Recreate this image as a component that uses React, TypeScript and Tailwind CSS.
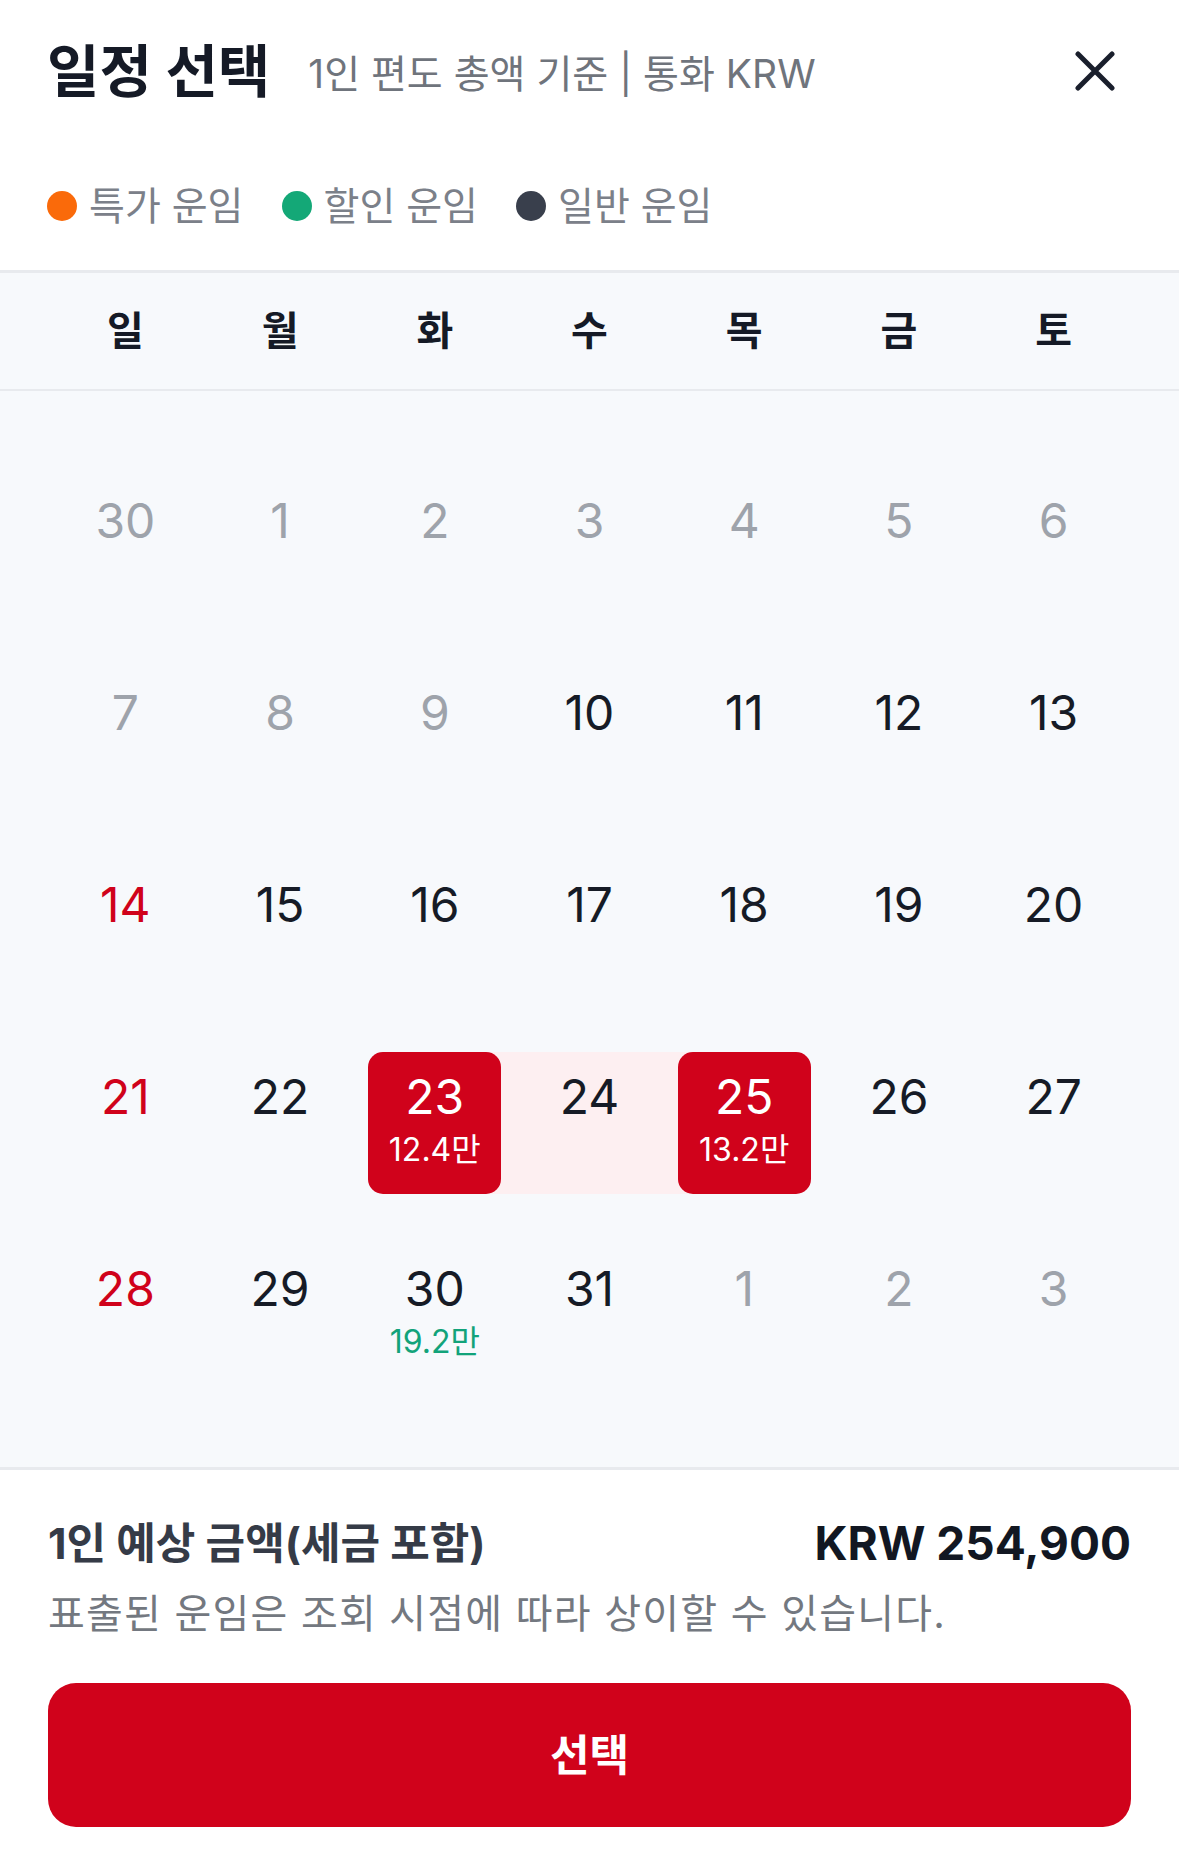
import React from "react";

type Cell = {
  d: number;
  kind: "muted" | "normal" | "sun" | "sel";
  price?: string;
  priceColor?: "green";
  range?: "start" | "mid" | "end";
};

const rows: Cell[][] = [
  [30, 1, 2, 3, 4, 5, 6].map((d) => ({ d, kind: "muted" as const })),
  [
    { d: 7, kind: "muted" },
    { d: 8, kind: "muted" },
    { d: 9, kind: "muted" },
    { d: 10, kind: "normal" },
    { d: 11, kind: "normal" },
    { d: 12, kind: "normal" },
    { d: 13, kind: "normal" },
  ],
  [
    { d: 14, kind: "sun" },
    { d: 15, kind: "normal" },
    { d: 16, kind: "normal" },
    { d: 17, kind: "normal" },
    { d: 18, kind: "normal" },
    { d: 19, kind: "normal" },
    { d: 20, kind: "normal" },
  ],
  [
    { d: 21, kind: "sun" },
    { d: 22, kind: "normal" },
    { d: 23, kind: "sel", price: "12.4만", range: "start" },
    { d: 24, kind: "normal", range: "mid" },
    { d: 25, kind: "sel", price: "13.2만", range: "end" },
    { d: 26, kind: "normal" },
    { d: 27, kind: "normal" },
  ],
  [
    { d: 28, kind: "sun" },
    { d: 29, kind: "normal" },
    { d: 30, kind: "normal", price: "19.2만", priceColor: "green" },
    { d: 31, kind: "normal" },
    { d: 1, kind: "muted" },
    { d: 2, kind: "muted" },
    { d: 3, kind: "muted" },
  ],
];

const weekdays = ["일", "월", "화", "수", "목", "금", "토"];

function DayCell({ c }: { c: Cell }) {
  const band =
    c.range === "start"
      ? "bg-[linear-gradient(to_right,transparent_50%,#fdeff1_50%)]"
      : c.range === "end"
      ? "bg-[linear-gradient(to_right,#fdeff1_50%,transparent_50%)]"
      : c.range === "mid"
      ? "bg-[#fdeff1]"
      : "";
  const numColor =
    c.kind === "muted"
      ? "text-[#9ea3ab]"
      : c.kind === "sun"
      ? "text-[#d0021b]"
      : c.kind === "sel"
      ? "text-white"
      : "text-[#161b26]";
  return (
    <div className="h-[192px] pt-[25px]">
      <div className={`h-[142px] ${band}`}>
        <div
          className={`mx-[11px] h-full rounded-[15px] flex flex-col items-center pt-[17px] ${
            c.kind === "sel" ? "bg-[#d0021b]" : ""
          }`}
        >
          <div className={`text-[48px] leading-[56px] font-normal ${numColor}`}>{c.d}</div>
          {c.price && (
            <div
              className={`mt-[5px] text-[32px] leading-[40px] ${
                c.priceColor === "green" ? "text-[#12a37a]" : "text-white"
              }`}
            >
              {c.price}
            </div>
          )}
        </div>
      </div>
    </div>
  );
}

export default function App() {
  return (
    <div
      className="w-[1179px] h-[1857px] bg-white flex flex-col"
      style={{ fontFamily: 'Inter, "Noto Sans CJK KR", sans-serif' }}
    >
      {/* Header */}
      <div className="h-[144px] flex items-center pl-[47px] pr-[64px]">
        <div className="text-[57px] leading-[64px] font-bold text-[#151a26]">일정 선택</div>
        <div className="ml-[38px] text-[39px] leading-[48px] text-[#6f747c] mt-[4px]">
          1인 편도 총액 기준 | 통화 KRW
        </div>
        <div className="flex-1" />
        <svg width="40" height="40" viewBox="0 0 40 40" className="mt-[-2px]">
          <path
            d="M3 3 L37 37 M37 3 L3 37"
            stroke="#1a1f2c"
            strokeWidth="5"
            strokeLinecap="round"
          />
        </svg>
      </div>

      {/* Legend */}
      <div className="h-[126px] flex items-center pl-[47px] pb-[2px] text-[39px] text-[#7b8089]">
        <div className="flex items-center">
          <span className="w-[30px] h-[30px] rounded-full bg-[#fa6a0a]" />
          <span className="ml-[12px]">특가 운임</span>
        </div>
        <div className="flex items-center ml-[38px]">
          <span className="w-[30px] h-[30px] rounded-full bg-[#14a877]" />
          <span className="ml-[12px]">할인 운임</span>
        </div>
        <div className="flex items-center ml-[38px]">
          <span className="w-[30px] h-[30px] rounded-full bg-[#393f4c]" />
          <span className="ml-[12px]">일반 운임</span>
        </div>
      </div>

      {/* Weekdays */}
      <div className="border-t-[3px] border-b-[2px] border-[#e8eaee] bg-[#f7f9fc] h-[121px] px-[48px] grid grid-cols-7 items-center">
        {weekdays.map((w) => (
          <div key={w} className="text-center text-[40px] font-bold text-[#151a26]">
            {w}
          </div>
        ))}
      </div>

      {/* Calendar body */}
      <div className="bg-[#f7f9fc] px-[48px] pt-[60px] pb-[56px]">
        {rows.map((r, i) => (
          <div key={i} className="grid grid-cols-7">
            {r.map((c, j) => (
              <DayCell key={j} c={c} />
            ))}
          </div>
        ))}
      </div>

      {/* Footer */}
      <div className="border-t-[3px] border-[#e8eaee] flex-1 px-[48px] pt-[43px]">
        <div className="flex items-center justify-between h-[60px]">
          <div className="text-[43px] leading-[60px] font-bold text-[#353b47]">
            1인 예상 금액(세금 포함)
          </div>
          <div className="text-[46px] leading-[60px] font-bold text-[#121722]">
            KRW 254,900
          </div>
        </div>
        <div className="mt-[15px] text-[40px] leading-[52px] tracking-[1.2px] text-[#737880]">
          표출된 운임은 조회 시점에 따라 상이할 수 있습니다.
        </div>
        <button className="mt-[43px] w-full h-[144px] rounded-[28px] bg-[#d0021b] text-white text-[43px] font-bold flex items-center justify-center">
          선택
        </button>
      </div>
    </div>
  );
}
